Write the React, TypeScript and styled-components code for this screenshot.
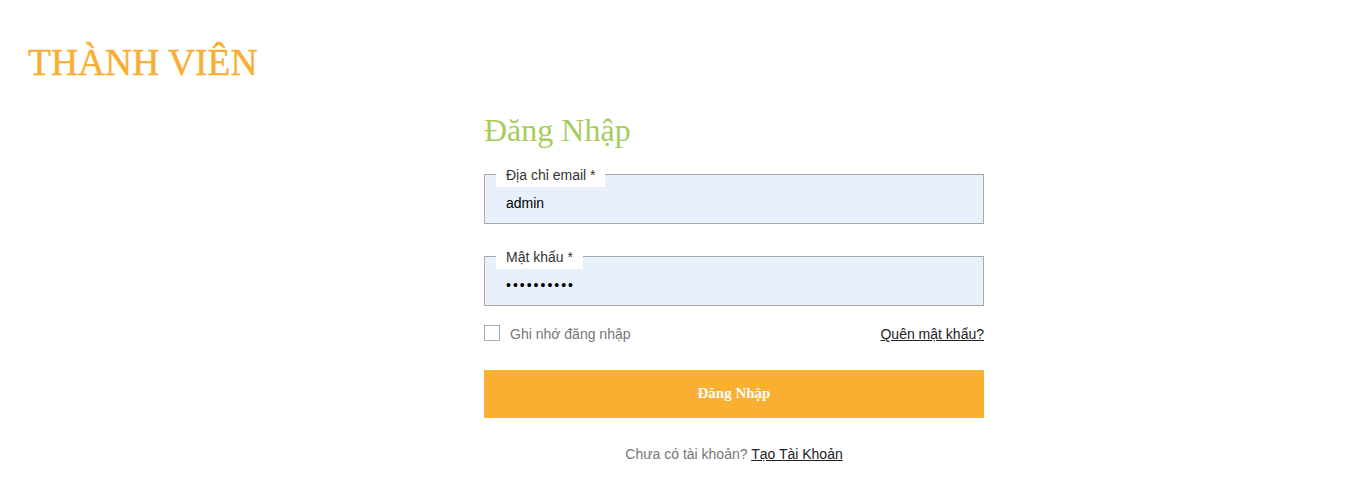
import React from 'react';
import styled, { createGlobalStyle } from 'styled-components';

const GlobalStyle = createGlobalStyle`
  body {
    margin: 0;
    background: #fff;
    font-family: "Liberation Sans", Arial, sans-serif;
  }
`;

const Page = styled.div`
  width: 1370px;
  min-height: 489px;
`;

const PageTitle = styled.h1`
  margin: 0;
  padding: 44px 0 0 28px;
  font-family: "Liberation Serif", "Times New Roman", serif;
  font-weight: 400;
  font-size: 37.5px;
  line-height: 1;
  color: #f9ae31;
  -webkit-text-stroke: 0.4px #f9ae31;
`;

const LoginForm = styled.form`
  display: flex;
  flex-direction: column;
  width: 500px;
  margin: 32px 0 0 484px;
`;

const FormTitle = styled.h2`
  margin: 0;
  font-family: "Liberation Serif", "Times New Roman", serif;
  font-weight: 400;
  font-size: 32px;
  line-height: 1;
  color: #a5cd5b;
`;

const Field = styled.div<{ $gap: number }>`
  position: relative;
  margin-top: ${p => p.$gap}px;
`;

const FieldLabel = styled.label`
  position: absolute;
  top: -5px;
  left: 12px;
  height: 18px;
  box-sizing: border-box;
  padding: 0 10px 4px;
  background: #fff;
  font-size: 14px;
  line-height: 13px;
  color: #333;
`;

const TextInput = styled.input<{ $spaced?: boolean }>`
  display: block;
  width: 100%;
  height: 50px;
  box-sizing: border-box;
  margin: 0;
  padding: 8px 21px 0;
  border: 1px solid #a9a9a9;
  border-radius: 0;
  background: #e8f0fe;
  font-family: "Liberation Sans", Arial, sans-serif;
  font-size: 14px;
  letter-spacing: ${p => (p.$spaced ? '2px' : 'normal')};
  color: #000;
  outline: none;
`;

const OptionsRow = styled.div`
  display: flex;
  align-items: center;
  justify-content: space-between;
  margin-top: 19px;
  height: 16px;
`;

const Remember = styled.label`
  display: flex;
  align-items: center;
  gap: 10px;
  font-size: 14px;
  color: #777;
`;

const CheckBox = styled.span`
  width: 16px;
  height: 16px;
  box-sizing: border-box;
  border: 1px solid #ababab;
  background: #fff;
`;

const RememberText = styled.span`
  padding-top: 3px;
`;

const TextLink = styled.a<{ $raised?: boolean }>`
  font-size: 14px;
  color: #222;
  text-decoration: underline;
  padding-top: ${p => (p.$raised ? '0' : '3px')};
`;

const SubmitButton = styled.button`
  margin-top: 29px;
  height: 48px;
  border: none;
  border-radius: 0;
  background: #f9af32;
  color: #fff;
  font-family: "Liberation Serif", "Times New Roman", serif;
  font-weight: 700;
  font-size: 15px;
  cursor: pointer;
`;

const SignupLine = styled.p`
  margin: 28px 0 0;
  text-align: center;
  font-size: 14px;
  line-height: 16px;
  color: #777;
`;

const App: React.FC = () => {
  return (
    <Page>
      <GlobalStyle />
      <PageTitle>THÀNH VIÊN</PageTitle>
      <LoginForm onSubmit={e => e.preventDefault()}>
        <FormTitle>Đăng Nhập</FormTitle>

        <Field $gap={28}>
          <FieldLabel>Địa chỉ email *</FieldLabel>
          <TextInput type="text" defaultValue="admin" />
        </Field>

        <Field $gap={32}>
          <FieldLabel>Mật khẩu *</FieldLabel>
          <TextInput type="password" defaultValue="1234567890" $spaced />
        </Field>

        <OptionsRow>
          <Remember>
            <CheckBox />
            <RememberText>Ghi nhớ đăng nhập</RememberText>
          </Remember>
          <TextLink href="#">Quên mật khẩu?</TextLink>
        </OptionsRow>

        <SubmitButton type="submit">Đăng Nhập</SubmitButton>

        <SignupLine>
          Chưa có tài khoản? <TextLink href="#" $raised>Tạo Tài Khoản</TextLink>
        </SignupLine>
      </LoginForm>
    </Page>
  );
};

export default App;
